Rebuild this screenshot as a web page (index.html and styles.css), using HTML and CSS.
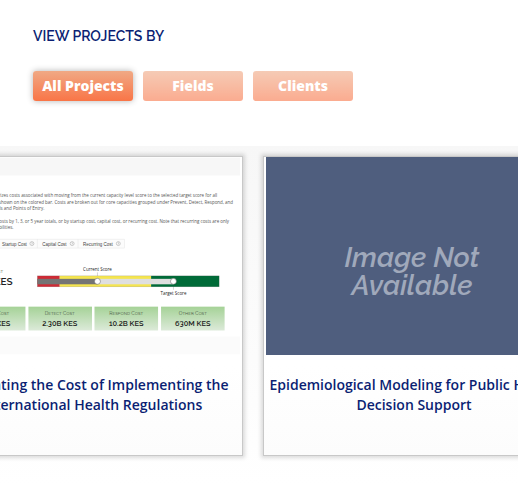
FILE: index.html
```html
<!DOCTYPE html>
<html lang="en">
<head>
<meta charset="utf-8">
<meta name="viewport" content="width=device-width, initial-scale=1">
<title>Projects</title>
<link rel="stylesheet" href="styles.css">
</head>
<body>
<header class="filters">
  <h1 class="filters-title">VIEW PROJECTS BY</h1>
  <nav class="filter-list" aria-label="View projects by">
    <button type="button" class="filter active" aria-pressed="true">All Projects</button>
    <button type="button" class="filter" aria-pressed="false">Fields</button>
    <button type="button" class="filter" aria-pressed="false">Clients</button>
  </nav>
</header>
<main class="projects">
  <div class="track">
    <article class="card">
      <svg class="thumb" viewBox="0 0 596 396" role="img" aria-label="Cost report">
        <defs>
          <linearGradient id="tile" x1="0" y1="0" x2="0" y2="1">
            <stop offset="0" stop-color="#a5d297"/>
            <stop offset="1" stop-color="#dcead9"/>
          </linearGradient>
        </defs>
        <rect width="596" height="396" fill="#fff"/>
        <rect width="596" height="36" fill="#f7f7f7"/>
        <rect y="360" width="596" height="36" fill="#fbfbfb"/>
        <g class="copy">
          <text x="550" y="80">summarizes costs associated with moving from the current capacity level score to the selected target score for all</text>
          <text x="582" y="93">shown on the colored bar. Costs are broken out for core capacities grouped under Prevent, Detect, Respond, and</text>
          <text x="202" y="106">Hazards and Points of Entry.</text>
          <text x="574" y="131">costs by 1, 3, or 5 year totals, or by startup cost, capital cost, or recurring cost. Note that recurring costs are only</text>
          <text x="140" y="144">capabilities.</text>
        </g>
        <g fill="#fcfcfc" stroke="#e4e4e4">
          <rect x="60" y="164" width="303" height="18"/>
          <path d="M188 164V182M270 164V182"/>
        </g>
        <g class="tabs">
          <text x="117" y="177">Startup Cost</text>
          <text x="198" y="177">Capital Cost</text>
          <text x="280" y="177">Recurring Cost</text>
        </g>
        <g fill="none" stroke="#999">
          <circle cx="177" cy="173" r="4"/><path d="M176 172q1-2 2 0l-1 2v1"/>
          <circle cx="258" cy="173" r="4"/><path d="M257 172q1-2 2 0l-1 2v1"/>
          <circle cx="351" cy="173" r="4"/><path d="M350 172q1-2 2 0l-1 2v1"/>
        </g>
        <text class="label end" x="119" y="233">Total Cost</text>
        <text class="total end" x="138" y="257">KES</text>
        <text class="score" x="309" y="229">Current Score</text>
        <path d="M309 231V245M462 253V266" stroke="#aaa"/>
        <rect x="188" y="238" width="45" height="22" fill="#cf2a35"/>
        <rect x="233" y="238" width="184" height="22" fill="#f5e54f"/>
        <rect x="417" y="238" width="137" height="22" fill="#006b38"/>
        <rect x="188" y="244" width="121" height="11" fill="#747474"/>
        <rect x="309" y="244" width="153" height="11" fill="#dfdfdf"/>
        <rect x="188" y="238" width="366" height="22" fill="none" stroke="#555" stroke-opacity=".35"/>
        <circle cx="309" cy="249" r="6" fill="#fff" stroke="#555"/>
        <circle cx="462" cy="249" r="6" fill="#fff" stroke="#555"/>
        <text class="score" x="462" y="276">Target Score</text>
        <g fill="url(#tile)">
          <rect x="36" y="300" width="128" height="48"/>
          <rect x="170" y="300" width="128" height="48"/>
          <rect x="303" y="300" width="128" height="48"/>
          <rect x="437" y="300" width="128" height="48"/>
        </g>
        <g class="label mid">
          <text x="98" y="316">Prevent Cost</text>
          <text x="233" y="316">Detect Cost</text>
          <text x="367" y="316">Respond Cost</text>
          <text x="501" y="316">Other Cost</text>
        </g>
        <g class="value">
          <text x="100" y="338">1.17B KES</text>
          <text x="233" y="338">2.30B KES</text>
          <text x="367" y="338">10.2B KES</text>
          <text x="501" y="338">630M KES</text>
        </g>
      </svg>
      <h2 class="card-title">Estimating the Cost of Implementing the International Health Regulations</h2>
    </article>
    <article class="card">
      <div class="thumb placeholder">Image Not<br>Available</div>
      <h2 class="card-title">Epidemiological Modeling for Public Health Decision Support</h2>
    </article>
  </div>
</main>
</body>
</html>
```
FILE: styles.css
```css
* { box-sizing: border-box; }
body {
  margin: 0;
  background: #fff;
  color: #0b1f73;
  font-family: "Open Sans", sans-serif;
  overflow-x: hidden;
}
h1, h2 { margin: 0; }

.filters { padding: 26px 33px 45px; }
.filters-title {
  font: 600 14px/20px Raleway, Inter, sans-serif;
}
.filter-list {
  display: flex;
  gap: 10px;
  margin-top: 25px;
}
.filter {
  width: 100px;
  height: 30px;
  padding: 0;
  border: 0;
  border-radius: 3px;
  background: linear-gradient(#f0a985, #f97547);
  color: #fff;
  font: 800 14px/20px "Open Sans", sans-serif;
  opacity: .6;
  cursor: pointer;
}
.filter.active {
  opacity: 1;
  box-shadow: 0 0 6px rgba(0, 0, 0, .3);
}

.projects {
  padding: 10px 0 30px;
  background: linear-gradient(#f7f7f7, #fff);
  overflow: hidden;
}
.track {
  display: flex;
  gap: 20px;
  margin-left: -59px;
}
.card {
  flex: 0 0 302px;
  min-height: 300px;
  padding: 0 2px;
  border: 1px solid #c8c8c8;
  background: linear-gradient(#fff 70%, #fcfcfc);
  box-shadow: 0 0 4px 2px rgba(0, 0, 0, .14);
}
.thumb {
  display: block;
  width: 100%;
  height: 198px;
}
.placeholder {
  display: flex;
  align-items: center;
  justify-content: center;
  padding: 32px 4px 0 0;
  background: #4f5e7e;
  color: #a0a9bb;
  font: italic 600 28px/28px Raleway, Lato, sans-serif;
  text-align: center;
}
.card-title {
  margin-top: 20px;
  font-size: 14px;
  font-weight: 600;
  line-height: 20px;
  text-align: center;
}

/* Report thumbnail lettering */
.copy { fill: #555; font-size: 9px; text-anchor: end; }
.tabs { fill: #444; font: 9px "Liberation Sans", sans-serif; }
.label { fill: #4d5c48; font: small-caps 10px Raleway, Lato, sans-serif; }
.score { fill: #222; font: 9px "Open Sans", sans-serif; text-anchor: middle; }
.total { fill: #222; font: 600 20px Raleway, Lato, sans-serif; }
.value { fill: #222; font: 600 15px Raleway, Lato, sans-serif; text-anchor: middle; }
.end { text-anchor: end; }
.mid { text-anchor: middle; }
```
